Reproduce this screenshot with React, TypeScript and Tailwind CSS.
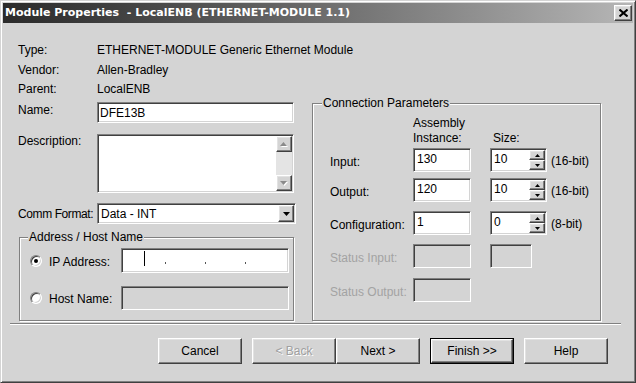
import React from "react";

const sunken =
  "border border-t-[#808080] border-l-[#808080] border-b-white border-r-white shadow-[inset_1px_1px_0_#404040,inset_-1px_-1px_0_#d4d4d4]";
const raised =
  "border border-t-white border-l-white border-b-[#404040] border-r-[#404040] shadow-[inset_-1px_-1px_0_#808080,inset_1px_1px_0_#e2e2e2]";
const group = "border border-[#808080] shadow-[inset_1px_1px_0_#fff,1px_1px_0_#fff]";

function Tri({ dir, color = "#000", w = 7, h = 4 }: { dir: "up" | "down"; color?: string; w?: number; h?: number }) {
  const d = dir === "up" ? `M0 ${h}L${w / 2} 0L${w} ${h}Z` : `M0 0L${w} 0L${w / 2} ${h}Z`;
  return (
    <svg width={w} height={h} viewBox={`0 0 ${w} ${h}`} className="block">
      <path d={d} fill={color} />
    </svg>
  );
}

function DisabledTri({ dir }: { dir: "up" | "down" }) {
  return (
    <div className="relative w-[8px] h-[5px]">
      <div className="absolute left-[1px] top-[1px]">
        <Tri dir={dir} color="#ffffff" w={7} h={4} />
      </div>
      <div className="absolute left-0 top-0">
        <Tri dir={dir} color="#8a8a8a" w={7} h={4} />
      </div>
    </div>
  );
}

function InfoRow({ label, value, cls = "" }: { label: string; value: string; cls?: string }) {
  return (
    <div className={`flex h-[14px] ${cls}`}>
      <div className="w-[79px]">{label}</div>
      <div>{value}</div>
    </div>
  );
}

function Radio({ checked }: { checked: boolean }) {
  return (
    <div className="w-[12px] h-[12px] rounded-full border border-t-[#808080] border-l-[#808080] border-b-white border-r-white shadow-[inset_1px_1px_0_#404040,inset_-1px_-1px_0_#d4d4d4] bg-white flex items-center justify-center">
      {checked && <div className="w-[4px] h-[4px] rounded-full bg-black" />}
    </div>
  );
}

function Spinner() {
  return (
    <div className="ml-auto w-[16px] flex flex-col gap-0">
      <div className={`h-[10px] bg-[#d4d4d4] ${raised} flex items-center justify-center`}>
        <Tri dir="up" w={5} h={3} />
      </div>
      <div className={`h-[10px] bg-[#d4d4d4] ${raised} flex items-center justify-center`}>
        <Tri dir="down" w={5} h={3} />
      </div>
    </div>
  );
}

function ParamRow({
  label,
  inst,
  size,
  bits,
  disabled,
  noSize,
  cls = "",
}: {
  label: string;
  inst?: string;
  size?: string;
  bits?: string;
  disabled?: boolean;
  noSize?: boolean;
  cls?: string;
}) {
  return (
    <div className={`flex items-center h-[24px] ${cls}`}>
      <div className={`w-[100px] pl-[17px] pt-[3px] whitespace-nowrap ${disabled ? "text-[#a3a3a3]" : ""}`}>{label}</div>
      <div className={`w-[58px] h-[24px] ${sunken} ${disabled ? "bg-[#d4d4d4]" : "bg-white"} pl-[3px] pt-[3px]`}>{inst}</div>
      {!noSize && (
        disabled ? (
          <div className={`ml-[19px] w-[42px] h-[24px] ${sunken} bg-[#d4d4d4]`} />
        ) : (
          <>
            <div className={`ml-[19px] w-[57px] h-[24px] ${sunken} bg-white flex p-[1px]`}>
              <div className="pl-[2px] pt-[2px]">{size}</div>
              <Spinner />
            </div>
            <div className="ml-[4px] pt-[1px] whitespace-nowrap">{bits}</div>
          </>
        )
      )}
    </div>
  );
}

function Button({ children, disabled, def, cls = "" }: { children: React.ReactNode; disabled?: boolean; def?: boolean; cls?: string }) {
  const inner = (
    <div className={`w-full h-full bg-[#d4d4d4] ${raised} flex items-center justify-center ${disabled ? "text-[#a0a0a0] [text-shadow:1px_1px_0_#fff]" : ""}`}>
      {children}
    </div>
  );
  if (def) {
    return <div className={`w-[84px] h-[26px] border border-black ${cls}`}>{inner}</div>;
  }
  return <div className={`w-[84px] h-[26px] ${cls}`}>{inner}</div>;
}

export default function App() {
  return (
    <div className="w-[636px] h-[383px] bg-[#d4d4d4] border border-t-[#d4d4d4] border-l-[#d4d4d4] border-b-[#404040] border-r-[#404040] shadow-[inset_1px_1px_0_#fff,inset_-1px_-1px_0_#808080] p-[2px] flex flex-col text-[12px] leading-[14px] text-black font-['Liberation_Sans',Arial,sans-serif] overflow-hidden">
      {/* Title bar */}
      <div className="h-[20px] shrink-0 flex items-center bg-linear-to-r from-[#2a2a2a] to-[#b6b6b6] pl-[2px] pr-[1px]">
        <span className="whitespace-pre text-white font-bold text-[11px] font-['DejaVu_Sans',sans-serif]">
          Module Properties  - LocalENB (ETHERNET-MODULE 1.1)
        </span>
        <div className={`ml-auto w-[18px] h-[16px] bg-[#d4d4d4] ${raised} flex items-center justify-center`}>
          <svg width="9" height="8" viewBox="0 0 9 8" className="block">
            <path d="M0.5 0.5L8.5 7.5M8.5 0.5L0.5 7.5" stroke="#000" strokeWidth="2" />
          </svg>
        </div>
      </div>

      {/* Body */}
      <div className="flex flex-col pl-[15px] pt-[20px]">
        <InfoRow label="Type:" value="ETHERNET-MODULE Generic Ethernet Module" />
        <InfoRow label="Vendor:" value="Allen-Bradley" cls="mt-[6px]" />
        <InfoRow label="Parent:" value="LocalENB" cls="mt-[5px]" />

        <div className="flex items-start">
          {/* Left column */}
          <div className="w-[278px] flex flex-col">
            <div className="flex mt-[6px]">
              <div className="w-[79px] pt-[1px]">Name:</div>
              <div className={`w-[197px] h-[21px] ${sunken} bg-white pl-[2px] flex items-center`}>DFE13B</div>
            </div>
            <div className="flex mt-[11px]">
              <div className="w-[79px]">Description:</div>
              <div className={`w-[197px] h-[59px] ${sunken} bg-white p-[1px] flex justify-end`}>
                <div className="w-[16px] flex flex-col">
                  <div className={`h-[16px] bg-[#d4d4d4] ${raised} flex items-center justify-center`}>
                    <DisabledTri dir="up" />
                  </div>
                  <div className="flex-1 bg-[#e4e4e4]" />
                  <div className={`h-[16px] bg-[#d4d4d4] ${raised} flex items-center justify-center`}>
                    <DisabledTri dir="down" />
                  </div>
                </div>
              </div>
            </div>
            <div className="flex items-center mt-[10px]">
              <div className="w-[79px] tracking-[-0.4px] whitespace-nowrap">Comm Format:</div>
              <div className={`w-[199px] h-[21px] ${sunken} bg-white p-[1px] flex items-center`}>
                <div className="pl-[2px]">Data - INT</div>
                <div className={`ml-auto w-[16px] h-[17px] bg-[#d4d4d4] ${raised} flex items-center justify-center`}>
                  <Tri dir="down" w={7} h={4} />
                </div>
              </div>
            </div>

            {/* Address / Host Name */}
            <div className={`mt-[13px] ml-[1px] w-[275px] h-[84px] ${group} flex flex-col`}>
              <div className="self-start ml-[8px] -mt-[8px] px-[1px] bg-[#d4d4d4] h-[14px]">Address / Host Name</div>
              <div className="flex items-center mt-[4px]">
                <div className="ml-[10px]">
                  <Radio checked />
                </div>
                <div className="ml-[7px] w-[72px] pt-[2px]">IP Address:</div>
                <div className={`w-[168px] h-[25px] ${sunken} bg-white flex items-start`}>
                  <div className="ml-[22px] mt-[2px] w-[1px] h-[15px] bg-black" />
                  <div className="ml-[20px] mt-[13px] w-[1px] h-[2px] bg-[#555]" />
                  <div className="ml-[39px] mt-[13px] w-[1px] h-[2px] bg-[#555]" />
                  <div className="ml-[39px] mt-[13px] w-[1px] h-[2px] bg-[#555]" />
                </div>
              </div>
              <div className="flex items-center mt-[13px]">
                <div className="ml-[10px]">
                  <Radio checked={false} />
                </div>
                <div className="ml-[7px] w-[72px] pt-[2px]">Host Name:</div>
                <div className={`w-[168px] h-[24px] ${sunken} bg-[#d4d4d4]`} />
              </div>
            </div>
          </div>

          {/* Right column: Connection Parameters */}
          <div className={`ml-[16px] mt-[7px] w-[289px] h-[218px] ${group} flex flex-col`}>
            <div className="self-start ml-[9px] -mt-[8px] px-[1px] bg-[#d4d4d4] h-[14px]">Connection Parameters</div>
            <div className="flex mt-[6px] leading-[15px]">
              <div className="w-[100px]" />
              <div className="w-[77px]">
                Assembly
                <br />
                Instance:
              </div>
              <div className="pt-[15px] pl-[3px]">Size:</div>
            </div>
            <ParamRow cls="mt-[2px]" label="Input:" inst="130" size="10" bits="(16-bit)" />
            <ParamRow cls="mt-[6px]" label="Output:" inst="120" size="10" bits="(16-bit)" />
            <ParamRow cls="mt-[9px]" label="Configuration:" inst="1" size="0" bits="(8-bit)" />
            <ParamRow cls="mt-[9px]" label="Status Input:" disabled />
            <ParamRow cls="mt-[10px]" label="Status Output:" disabled noSize />
          </div>
        </div>
      </div>

      {/* Separator */}
      <div className="mt-[2px] ml-[7px] w-[611px] h-[2px] border-t border-t-[#808080] border-b border-b-white" />

      {/* Buttons */}
      <div className="flex mt-[13px] pl-[155px]">
        <Button>Cancel</Button>
        <Button disabled cls="ml-[10px]">&lt; Back</Button>
        <Button>Next &gt;</Button>
        <Button def cls="ml-[10px]">Finish &gt;&gt;</Button>
        <Button cls="ml-[10px]">Help</Button>
      </div>
    </div>
  );
}
